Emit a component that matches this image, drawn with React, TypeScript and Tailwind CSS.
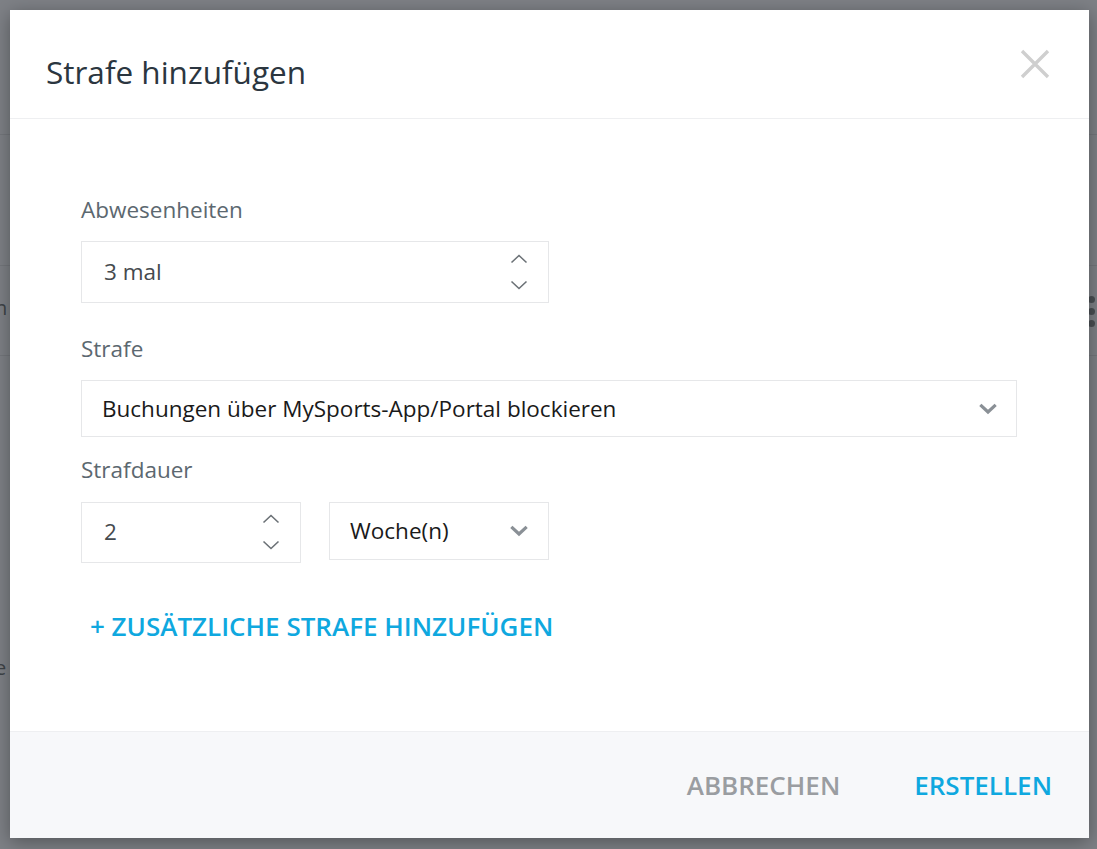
import React from "react";

const font = { fontFamily: '"Open Sans", "Noto Sans", sans-serif' };

function Spinner() {
  return (
    <div className="flex flex-col items-center gap-[16px] text-[#6b7176]">
      <svg width="18" height="10" viewBox="0 0 18 10" fill="none" stroke="currentColor" strokeWidth="1.6">
        <path d="M1.5 8.5 9 1.5l7.5 7" />
      </svg>
      <svg width="18" height="10" viewBox="0 0 18 10" fill="none" stroke="currentColor" strokeWidth="1.6">
        <path d="M1.5 1.5 9 8.5l7.5-7" />
      </svg>
    </div>
  );
}

function Chevron() {
  return (
    <svg width="18" height="12" viewBox="0 0 18 12" fill="none" stroke="#8a9096" strokeWidth="3.2" strokeLinecap="square">
      <path d="M2.5 3 9 9l6.5-6" />
    </svg>
  );
}

function Label({ children }: { children: React.ReactNode }) {
  return <div className="text-[22.5px] leading-none text-[#5c6870]">{children}</div>;
}

export default function App() {
  return (
    <div className="relative h-[849px] w-full overflow-hidden bg-[#7e8186]" style={font}>
      {/* dimmed page behind the dialog */}
      <div className="absolute left-0 top-[134px] h-px w-full bg-[#74777c]" />
      <div className="absolute left-0 top-[265px] h-px w-full bg-[#74777c]" />
      <div className="absolute left-0 top-[355px] h-px w-full bg-[#74777c]" />
      <div className="absolute left-0 top-[298px] h-[26px] w-[10px] overflow-hidden">
        <span className="block -translate-x-[5px] text-[20px] leading-none text-[#3f4448]">n</span>
      </div>
      <div className="absolute left-0 top-[658px] h-[26px] w-[10px] overflow-hidden">
        <span className="block -translate-x-[5px] text-[20px] leading-none text-[#3f4448]">e</span>
      </div>
      <div className="absolute right-[2px] top-[296px] flex flex-col gap-[5px]">
        <span className="h-[7px] w-[7px] rounded-full bg-[#4a4f53]" />
        <span className="h-[7px] w-[7px] rounded-full bg-[#4a4f53]" />
        <span className="h-[7px] w-[7px] rounded-full bg-[#4a4f53]" />
      </div>

      <div className="absolute left-[10px] top-[10px] flex h-[828px] w-[1079px] flex-col bg-white shadow-[0_4px_18px_rgba(0,0,0,0.35)]">
        <div className="flex h-[109px] items-center justify-between border-b border-[#eeeff1] pl-[36px] pr-[38px] pt-[16px]">
          <h1 className="text-[31.5px] font-normal leading-none text-[#2b3640]">Strafe hinzufügen</h1>
          <svg className="-mt-[16px]" width="32" height="32" viewBox="0 0 32 32" stroke="#cfcfcf" strokeWidth="3.4">
            <path d="M3 3l26 26M29 3 3 29" />
          </svg>
        </div>

        <div className="flex flex-1 flex-col pl-[71px] pt-[80px]">
          <Label>Abwesenheiten</Label>
          <div className="mt-[19px] flex h-[62px] w-[468px] items-center justify-between border border-[#e6e7e9] pl-[22px] pr-[20px]">
            <span className="text-[22.5px] text-[#454a4e]">3 mal</span>
            <Spinner />
          </div>

          <div className="mt-[35px]">
            <Label>Strafe</Label>
          </div>
          <div className="mt-[20px] flex h-[57px] w-[936px] items-center justify-between border border-[#e6e7e9] pl-[20px] pr-[19px]">
            <span className="text-[22.5px] text-[#1a1a1a]">Buchungen über MySports-App/Portal blockieren</span>
            <Chevron />
          </div>

          <div className="mt-[22px]">
            <Label>Strafdauer</Label>
          </div>
          <div className="mt-[20px] flex items-start gap-[28px]">
            <div className="flex h-[61px] w-[220px] items-center justify-between border border-[#e6e7e9] pl-[22px] pr-[20px]">
              <span className="text-[22.5px] text-[#454a4e]">2</span>
              <Spinner />
            </div>
            <div className="flex h-[58px] w-[220px] items-center justify-between border border-[#e6e7e9] pl-[20px] pr-[20px]">
              <span className="text-[22.5px] text-[#1a1a1a]">Woche(n)</span>
              <Chevron />
            </div>
          </div>

          <div className="mt-[50px] pl-[9px] text-[26px] font-semibold leading-none text-[#0fa8df]">
            + ZUSÄTZLICHE STRAFE HINZUFÜGEN
          </div>
        </div>

        <div className="flex h-[107px] items-center justify-end gap-[74px] border-t border-[#eeeff1] bg-[#f7f8fa] pr-[37px]">
          <span className="text-[26px] font-semibold leading-none text-[#9a9da1]">ABBRECHEN</span>
          <span className="text-[26px] font-semibold leading-none text-[#0fa8df]">ERSTELLEN</span>
        </div>
      </div>
    </div>
  );
}
